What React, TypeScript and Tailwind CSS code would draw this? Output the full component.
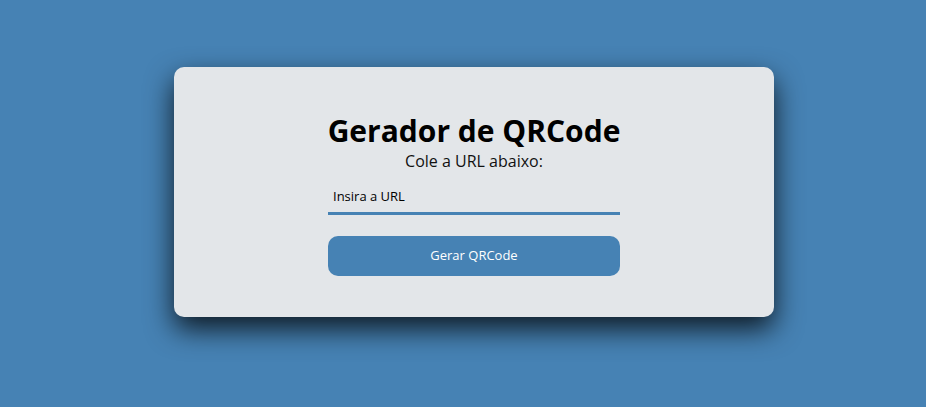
const App = () => {
  return (
    <div className="min-h-screen w-full bg-[#4682b4] pt-[67px] pl-[174px] font-['Open_Sans',sans-serif]">
      <div className="w-[600px] h-[250px] bg-[#e3e6e9] rounded-[10px] shadow-[0_12px_28px_rgba(0,0,0,0.8)] flex flex-col items-center pt-[44px]">
        <h1 className="text-[30px] leading-[40px] font-bold text-black">Gerador de QRCode</h1>
        <p className="text-[16px] leading-[22px] text-[#111] -mt-[1px]">Cole a URL abaixo:</p>
        <input
          type="text"
          placeholder="Insira a URL"
          className="mt-[12px] w-[292px] h-[31px] px-[5px] pb-[4px] bg-transparent border-b-[3px] border-[#4682b4] text-[13px] text-black placeholder:text-black outline-none"
        />
        <button className="mt-[21px] w-[292px] h-[40px] rounded-[10px] bg-[#4682b4] text-white text-[13px]">
          Gerar QRCode
        </button>
      </div>
    </div>
  );
};

export default App;
